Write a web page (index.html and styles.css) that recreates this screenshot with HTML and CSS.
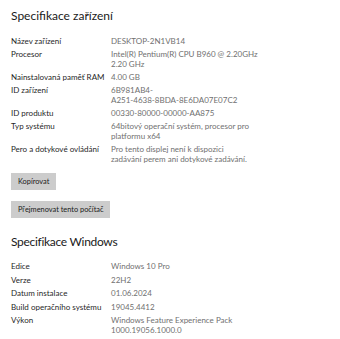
FILE: index.html
```html
<!DOCTYPE html>
<html lang="cs">
<head>
    <meta charset="UTF-8">
    <meta name="viewport" content="width=device-width, initial-scale=1.0">
    <title>Specifikace</title>
    <link rel="stylesheet" href="styles.css">
</head>
<body>
    <div class="page">
        <h2 class="section-title">Specifikace zařízení</h2>

        <div class="spec-list">
            <div class="spec-row">
                <span class="spec-label">Název zařízení</span>
                <span class="spec-value">DESKTOP-2N1VB14</span>
            </div>
            <div class="spec-row">
                <span class="spec-label">Procesor</span>
                <span class="spec-value">Intel(R) Pentium(R) CPU B960 @ 2.20GHz<br>2.20 GHz</span>
            </div>
            <div class="spec-row">
                <span class="spec-label">Nainstalovaná paměť RAM</span>
                <span class="spec-value">4.00 GB</span>
            </div>
            <div class="spec-row">
                <span class="spec-label">ID zařízení</span>
                <span class="spec-value">6B981AB4-<br>A251-4638-8BDA-8E6DA07E07C2</span>
            </div>
            <div class="spec-row">
                <span class="spec-label">ID produktu</span>
                <span class="spec-value">00330-80000-00000-AA875</span>
            </div>
            <div class="spec-row">
                <span class="spec-label">Typ systému</span>
                <span class="spec-value">64bitový operační systém, procesor pro<br>platformu x64</span>
            </div>
            <div class="spec-row">
                <span class="spec-label">Pero a dotykové ovládání</span>
                <span class="spec-value">Pro tento displej není k dispozici<br>zadávání perem ani dotykové zadávání.</span>
            </div>
        </div>

        <button class="btn btn-copy">Kopírovat</button>
        <button class="btn btn-rename">Přejmenovat tento počítač</button>

        <h2 class="section-title section-title--windows">Specifikace Windows</h2>

        <div class="spec-list spec-list--windows">
            <div class="spec-row">
                <span class="spec-label">Edice</span>
                <span class="spec-value">Windows 10 Pro</span>
            </div>
            <div class="spec-row">
                <span class="spec-label">Verze</span>
                <span class="spec-value">22H2</span>
            </div>
            <div class="spec-row">
                <span class="spec-label">Datum instalace</span>
                <span class="spec-value">01.06.2024</span>
            </div>
            <div class="spec-row">
                <span class="spec-label">Build operačního systému</span>
                <span class="spec-value">19045.4412</span>
            </div>
            <div class="spec-row">
                <span class="spec-label">Výkon</span>
                <span class="spec-value">Windows Feature Experience Pack<br>1000.19056.1000.0</span>
            </div>
        </div>
    </div>
</body>
</html>
```

FILE: styles.css
```css
* {
    margin: 0;
    padding: 0;
    box-sizing: border-box;
}

body {
    background-color: #ffffff;
    font-family: 'Lato', 'Noto Sans', sans-serif;
    color: #1f1f1f;
}

.page {
    padding: 6px 11px 0;
}

.section-title {
    font-size: 12px;
    font-weight: 400;
    line-height: 20px;
    color: #1a1a1a;
    margin-bottom: 10px;
}

.section-title--windows {
    margin-top: 14px;
    margin-bottom: 9px;
    letter-spacing: -0.3px;
}

.spec-row {
    display: flex;
    font-size: 8px;
    line-height: 10px;
    margin-bottom: 3px;
}

.spec-list--windows .spec-row {
    margin-bottom: 3.5px;
}

.spec-label {
    width: 100px;
    flex-shrink: 0;
    color: #1f1f1f;
}

.spec-value {
    color: #707070;
    white-space: nowrap;
}

.btn {
    display: block;
    height: 17px;
    padding: 0 7px;
    border: none;
    background-color: #cccccc;
    color: #1a1a1a;
    font-family: inherit;
    font-size: 7.4px;
}

.btn-copy {
    margin-top: 9px;
}

.btn-rename {
    margin-top: 11px;
}
```
